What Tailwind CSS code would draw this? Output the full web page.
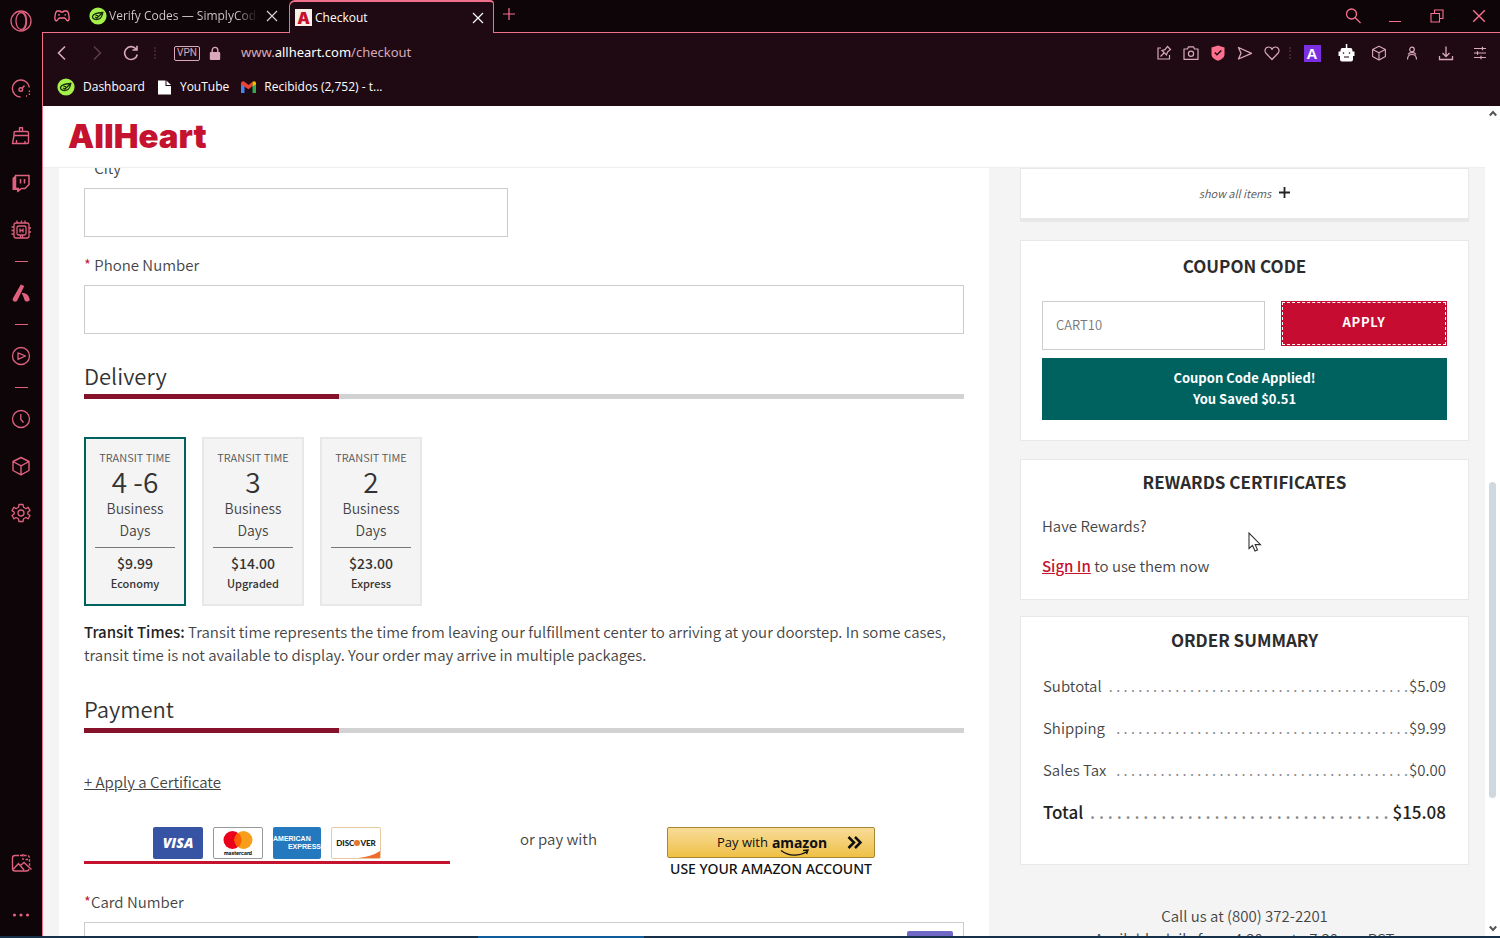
<!DOCTYPE html>
<html lang="en">
<head>
<meta charset="utf-8">
<title>Checkout</title>
<script src="https://cdn.jsdelivr.net/npm/@tailwindcss/browser@4"></script>
</head>
<body class="h-screen overflow-hidden bg-[#0d0508] font-['Noto_Sans_CJK_SC',sans-serif] text-[#444]">
<svg class="hidden">
  <defs>
    <symbol id="cube" viewBox="0 0 20 20"><path d="M10 1.500 18 5.500V14.500L10 18.800 2 14.500V5.500ZM2 5.500 10 9.800 18 5.500M10 9.800V18.800" fill="none" stroke="currentColor" stroke-width="1.400" stroke-linejoin="round"/></symbol>
    <symbol id="cross" viewBox="0 0 12 12"><path d="M1 1 11 11M11 1 1 11" fill="none" stroke="currentColor" stroke-width="1.200"/></symbol>
    <symbol id="leaf" viewBox="0 0 18 18"><circle cx="9" cy="9" r="8.600" fill="#a6f04c"/><path d="M3.500 9.500C4.500 6.500 7.500 6 13.800 5.500 13.300 8.500 12 11.500 9.500 12.200 6.500 13 3.300 12 3.500 9.500ZM6 10 8 11 13.500 5.700M6.500 8 9 8.800" fill="none" stroke="#1a2a0c" stroke-width="1.300"/></symbol>
  </defs>
</svg>
<div class="flex h-full flex-col">
<div class="flex min-h-0 flex-1">

  <!-- Browser sidebar -->
  <nav aria-label="Sidebar" class="flex w-[42px] shrink-0 flex-col items-center text-[#e0607f]">
    <button aria-label="Opera menu" class="flex h-[42px] w-full items-center justify-center"><svg class="size-[22px]" viewBox="0 0 22 22" fill="none" stroke="currentColor" stroke-width="1.300"><circle cx="11" cy="11" r="10"/><ellipse cx="11" cy="11" rx="5" ry="8.500"/><path d="M12 1.500C18 4 18 18 12 20.500"/></svg></button>
    <button aria-label="Speed dial" class="mt-[23px] flex h-[47px] w-full items-center justify-center"><svg class="size-5" viewBox="0 0 20 20" fill="none" stroke="currentColor" stroke-width="1.400"><path d="M9.500 18A8.500 8.500 0 1 1 18.300 8.500"/><circle cx="9.800" cy="10.500" r="1.800"/><path d="M11.200 9.200 13.500 6.500"/><path d="M18.400 11.500V17M15 17H16" stroke-dasharray="1.500 1.500"/></svg></button>
    <button aria-label="Cleaner" class="flex h-[47px] w-full items-center justify-center"><svg class="size-5" viewBox="0 0 20 20" fill="none" stroke="currentColor" stroke-width="1.400" stroke-linejoin="round"><path d="M8.500 5.500V1.800H11.500V5.500M3 9.500V7Q3 5.500 4.500 5.500H16Q17.500 5.500 17.500 7V9.500ZM3 9.500 1.500 17.500H16Q17.500 17.500 17.500 16V9.500M5.500 17V14M14 17V15"/></svg></button>
    <button aria-label="Twitch" class="flex h-[47px] w-full items-center justify-center"><svg class="size-5" viewBox="0 0 20 20" fill="none" stroke="currentColor" stroke-width="1.500"><path d="M4.500 2.500H18V11.500L14 15.500H10.500L7.500 18V15.500H4.500Z"/><path d="M1.500 5 5 2V15.500H8V17L6 19.500V17H1.500Z" fill="currentColor" stroke="none"/><path d="M9.500 6V10.500M13.500 6V10.500"/></svg></button>
    <button aria-label="GX Control" class="flex h-[47px] w-full items-center justify-center"><svg class="size-5" viewBox="0 0 20 20" fill="none" stroke="currentColor" stroke-width="1.300"><rect x="3" y="3" width="15" height="15" rx="2"/><rect x="6" y="6" width="9" height="9" rx="1.500"/><path d="M9 8.500V12.500M12 8.500V12.500M9 10.500H12M6 .5V3M10.500 .5V3M14 .5V3M.5 7H3M.5 10.500H3M.5 14H3M18 8H20M18 12H20M9.500 15V18M11.500 15V18"/></svg></button>
    <span class="flex h-4 items-center"><span class="h-px w-[13px] bg-current"></span></span>
    <button aria-label="Aria" class="flex h-[47px] w-full items-center justify-center"><svg class="size-5" viewBox="0 0 20 20" fill="currentColor"><path d="M9.800 1.500 13.300 3 6 18C4 20 .8 18 1.800 15.500ZM10.500 10C15 9.500 18 12 18.800 17 17 19.300 14.500 19 13.500 17 12.800 14.500 12 12.500 10.500 10Z"/></svg></button>
    <span class="flex h-4 items-center"><span class="h-px w-[13px] bg-current"></span></span>
    <button aria-label="Player" class="flex h-[47px] w-full items-center justify-center"><svg class="size-5" viewBox="0 0 20 20" fill="none" stroke="currentColor" stroke-width="1.300"><circle cx="10" cy="10" r="8.500"/><path d="M7 6.800 14.500 10 7 13.300Z" stroke-linejoin="round"/></svg></button>
    <span class="flex h-4 items-center"><span class="h-px w-[13px] bg-current"></span></span>
    <button aria-label="History" class="flex h-[47px] w-full items-center justify-center"><svg class="size-5" viewBox="0 0 20 20" fill="none" stroke="currentColor" stroke-width="1.300"><circle cx="10" cy="10" r="8.500"/><path d="M9.800 5V10.500L12.500 13.500"/></svg></button>
    <button aria-label="Extensions" class="flex h-[47px] w-full items-center justify-center"><svg class="size-5"><use href="#cube"/></svg></button>
    <button aria-label="Settings" class="flex h-[47px] w-full items-center justify-center"><svg class="size-5" viewBox="0 0 20 20" fill="none" stroke="currentColor" stroke-width="1.300" stroke-linejoin="round"><path d="M8 1.500H12L12.600 4.300 15 5.700 17 4.200 19 7.600 16.800 9V11L19 12.500 17 15.800 15 14.500 12.600 15.800 12 18.500H8L7.400 15.800 5 14.500 3 15.800 1 12.500 3.200 11V9L1 7.600 3 4.200 5 5.700 7.400 4.300Z"/><circle cx="10" cy="10" r="3"/></svg></button>
    <span class="flex-1"></span>
    <button aria-label="Snapshot wallpaper" class="flex h-[62px] w-full items-center justify-center"><svg class="size-[22px]" viewBox="0 0 22 22" fill="none" stroke="currentColor" stroke-width="1.400"><path d="M9 3.500H5A2.500 2.500 0 0 0 2.500 6V16.500A2.500 2.500 0 0 0 5 19H17A2.500 2.500 0 0 0 19 17M3.500 17 8.500 11.500 14 18M10.500 13.500 14 10.500 21.500 17.500"/><path d="M10 3.500H17A2.500 2.500 0 0 1 19.500 6V14M13 2V8M15.500 7.500H19" stroke-dasharray="2.500 1.500"/></svg></button>
    <button aria-label="More" class="flex h-[42px] w-full items-center justify-center"><svg class="size-[18px]" viewBox="0 0 18 18" fill="currentColor"><circle cx="2.500" cy="9" r="1.600"/><circle cx="9" cy="9" r="1.600"/><circle cx="15.500" cy="9" r="1.600"/></svg></button>
  </nav>

  <div class="flex min-w-0 flex-1 flex-col">
    <!-- Tab strip -->
    <div class="flex h-[33px] shrink-0 font-['Open_Sans','Noto_Sans',sans-serif] text-[12px] text-[#fa6f8f]">
      <button aria-label="GX Corner" class="flex w-10 items-center justify-center border-b border-[#f0708c]"><svg class="h-3 w-4" viewBox="0 0 16 12" fill="none" stroke="currentColor" stroke-width="1.300"><path d="M3.500 1H6L7 2H9L10 1H12.500C14.500 1 15.300 6 15 9.500 14.500 11.500 12.800 11 11.800 9L10.500 8H5.500L4.200 9C3.200 11 1.500 11.500 1 9.500 .7 6 1.500 1 3.500 1Z"/><path d="M4 4.800H6M10.500 4.800H12"/></svg></button>
      <div class="flex w-[207px] items-center border-b border-[#f0708c] pr-[11px] pl-[7px]">
        <svg class="size-[18px] shrink-0"><use href="#leaf"/></svg>
        <a href="#" class="ml-[2px] flex-1 overflow-hidden bg-linear-to-r from-[#d5ccd0] from-85% to-transparent bg-clip-text whitespace-nowrap text-transparent">Verify Codes — SimplyCode</a>
        <button aria-label="Close tab" class="ml-2 text-[#d8d0d3]"><svg class="size-3"><use href="#cross"/></svg></button>
      </div>
      <div class="flex w-[205px] items-center rounded-tl-md rounded-tr-sm border-x border-t-2 border-[#f0708c] bg-[#1f0a13] pr-[9px] pl-[5px]">
        <span class="flex size-[17px] items-center justify-center bg-[#f8efe8] font-['Inter',sans-serif] text-[16px] leading-none font-black text-[#c4122f]">A</span>
        <a href="#" class="ml-[3px] flex-1 text-white">Checkout</a>
        <button aria-label="Close tab" class="text-white"><svg class="size-3"><use href="#cross"/></svg></button>
      </div>
      <div class="flex flex-1 items-center border-b border-[#f0708c]">
        <button aria-label="New tab" class="ml-[9px] -mt-1"><svg class="size-3" viewBox="0 0 12 12" stroke="currentColor" stroke-width="1.200"><path d="M6 0V12M0 6H12"/></svg></button>
        <span class="flex-1"></span>
        <button aria-label="Search tabs" class="flex w-[42px] justify-center"><svg class="size-4" viewBox="0 0 16 16" fill="none" stroke="currentColor" stroke-width="1.300"><circle cx="6.500" cy="6" r="5"/><path d="M10 9.500 15.500 15"/></svg></button>
        <button aria-label="Minimize" class="flex w-[42px] justify-center"><svg class="size-3" viewBox="0 0 12 12" stroke="currentColor"><path d="M0 11.500H12"/></svg></button>
        <button aria-label="Restore" class="flex w-[42px] justify-center"><svg class="size-[14px]" viewBox="0 0 14 14" fill="none" stroke="currentColor" stroke-width="1.100"><path d="M1 4.500H9.500V13H1ZM4.500 4.500V1H13V9.500H9.500"/></svg></button>
        <button aria-label="Close window" class="flex w-[42px] justify-center"><svg class="size-[14px]"><use href="#cross"/></svg></button>
      </div>
    </div>

    <div class="flex min-h-0 flex-1 flex-col border-l border-[#f0708c]">
      <!-- Address bar -->
      <div class="flex h-10 shrink-0 items-center bg-[#1f0a13] pr-[3px] text-[#d9a9b9]">
        <button aria-label="Back" class="ml-[11px] flex w-4 justify-center"><svg class="size-4" viewBox="0 0 16 16" fill="none" stroke="currentColor" stroke-width="1.600"><path d="M11 1.500 4.500 8 11 14.500"/></svg></button>
        <button aria-label="Forward" class="ml-[19px] flex w-4 justify-center text-[#5d404b]"><svg class="size-4" viewBox="0 0 16 16" fill="none" stroke="currentColor" stroke-width="1.400"><path d="M5 1.500 11.500 8 5 14.500"/></svg></button>
        <button aria-label="Reload" class="ml-4 flex w-5 justify-center"><svg class="size-4" viewBox="0 0 16 16" fill="none" stroke="currentColor" stroke-width="1.600"><path d="M13 4A6.400 6.400 0 1 0 14.300 9.500M14 .8V5H9.500"/></svg></button>
        <span class="ml-[13px] h-3 border-l-2 border-dotted border-[#3b2430]"></span>
        <button class="ml-[18px] flex h-[15px] w-[26px] items-center justify-center rounded-xs border border-current font-['Roboto',sans-serif] text-[10px] leading-none">VPN</button>
        <svg class="ml-[9px] h-[15px] w-3" viewBox="0 0 12 15"><path d="M3.200 7V4.200A2.800 2.800 0 0 1 8.800 4.200V7" fill="none" stroke="currentColor" stroke-width="1.400"/><rect x=".8" y="6" width="10.400" height="8" rx="1" fill="currentColor"/></svg>
        <div role="textbox" aria-label="Address" contenteditable="true" class="ml-5 flex-1 font-['Noto_Sans','Open_Sans',sans-serif] text-[13px]">www.<span class="text-white">allheart.com</span>/checkout</div>
        <button aria-label="Edit page" class="flex w-[27px] justify-center"><svg class="size-4" viewBox="0 0 16 16" fill="none" stroke="currentColor" stroke-width="1.200"><path d="M5 3H2V14H13.500V10M4.500 11.500 8 8M6 5.500 10.500 10 11.500 7 14.500 4.500 11.500 1.500 9 4.700Z"/></svg></button>
        <button aria-label="Snapshot" class="flex w-[27px] justify-center"><svg class="size-4" viewBox="0 0 16 16" fill="none" stroke="currentColor" stroke-width="1.200"><path d="M1 4H4.500L5.500 1.800H10.500L11.500 4H15V14.300H1Z" stroke-linejoin="round"/><circle cx="8" cy="8.700" r="2.600"/></svg></button>
        <button aria-label="Ad blocker" class="flex w-[27px] justify-center"><svg class="size-4" viewBox="0 0 16 16"><path d="M8 .5 14.500 2.500V9.500C14.500 12.500 11.500 14.500 8 15.800 4.500 14.500 1.500 12.500 1.500 9.500V2.500Z" fill="#ff6f8e"/><path d="M4.800 7.500 7 9.800 11.300 5.500" fill="none" stroke="#1f0a13" stroke-width="1.500"/></svg></button>
        <button aria-label="My Flow" class="flex w-[27px] justify-center"><svg class="size-4" viewBox="0 0 16 16" fill="none" stroke="currentColor" stroke-width="1.300" stroke-linejoin="round"><path d="M1.500 2.500 14.500 8.300 1.500 14 4 8.300Z"/></svg></button>
        <button aria-label="Bookmark" class="flex w-[27px] justify-center"><svg class="size-4" viewBox="0 0 16 16" fill="none" stroke="currentColor" stroke-width="1.200"><path d="M8 14.500 1.800 8C0 5.500 1.500 2 4.500 2 6 2 7.500 3 8 4.500 8.500 3 10 2 11.500 2 14.500 2 16 5.500 14.200 8Z" stroke-linejoin="round"/></svg></button>
        <span class="mr-1 ml-[4px] h-3 border-l-2 border-dotted border-[#3b2430]"></span>
        <button aria-label="A extension" class="flex w-[34px] justify-center"><span class="flex size-[17px] items-center justify-center bg-[#7c2fe0] font-['Liberation_Sans',sans-serif] text-[15px] leading-none font-bold text-white">A</span></button>
        <button aria-label="Robot extension" class="flex w-[34px] justify-center"><svg class="h-[18px] w-[17px]" viewBox="0 0 17 18"><path d="M7.800 0H9.300V4H12.500C14 4 14.500 5 14.500 7.500H16.500V12H15V15.500Q15 17.500 13 17.500H4Q2 17.500 2 15.500V12H.5V7.500H2.500C2.500 5 3 4 4.500 4H7.800Z" fill="#fff"/><path d="M5.500 8V10M11.500 8V10M6 13H11" stroke="#6b5560" stroke-width="1.300"/></svg></button>
        <button aria-label="Extensions" class="flex w-8 justify-center"><svg class="size-4"><use href="#cube"/></svg></button>
        <button aria-label="Profile" class="flex w-[34px] justify-center"><svg class="size-4" viewBox="0 0 16 16" fill="none" stroke="currentColor" stroke-width="1.200"><circle cx="8" cy="4.500" r="2.300"/><path d="M3.500 14.500C3.500 11 5.500 9.500 8 9.500 10.500 9.500 12.500 11 12.500 14.500M4 9.500Q5 7.500 8 7.300 11 7.500 12 9.500"/></svg></button>
        <button aria-label="Downloads" class="flex w-[34px] justify-center"><svg class="size-4" viewBox="0 0 16 16" fill="none" stroke="currentColor" stroke-width="1.300"><path d="M8 1.500V11M4.500 8 8 11.500 11.500 8M1.500 11V14.500H14.500V11"/></svg></button>
        <button aria-label="Easy setup" class="flex w-[34px] justify-center"><svg class="size-4" viewBox="0 0 16 16" fill="none" stroke="currentColor" stroke-width="1.200"><path d="M2 3.500H14M2 8H14M2 12.500H14M10.500 1.700V5.300M5.500 6.200V9.800M9 10.700V14.300"/></svg></button>
      </div>
      <!-- Bookmarks -->
      <div class="flex h-[33px] shrink-0 items-center bg-[#1f0a13] pb-[5px] pl-[14px] font-['Open_Sans','Noto_Sans',sans-serif] text-[12px] text-white">
        <a href="#" class="flex items-center gap-2"><svg class="size-[18px]"><use href="#leaf"/></svg>Dashboard</a>
        <a href="#" class="ml-[13px] flex items-center gap-[9px]"><svg class="h-[15px] w-[13px]" viewBox="0 0 13 15"><path d="M0 .5H7.500V6H13V14.500H0ZM8.500 .5 13 5H8.500Z" fill="#fff"/></svg>YouTube</a>
        <a href="#" class="ml-3 flex items-center gap-2"><svg class="h-3 w-[15px]" viewBox="0 0 15 12"><path d="M0 2V12H3.500V5Z" fill="#4285f4"/><path d="M15 2V12H11.500V5Z" fill="#34a853"/><path d="M0 2Q1-.5 3.500 .800L7.500 4 11.500 .800V5L7.500 8.300 0 3.500Z" fill="#ea4335"/><path d="M11.500 .800Q14.500-.8 15 2V3.200L11.500 5.500Z" fill="#fbbc04"/></svg>Recibidos (2,752) - t...</a>
      </div>

      <!-- Web page -->
      <div class="flex min-h-0 flex-1 bg-white">
        <div class="flex min-w-0 flex-1 flex-col">
          <header class="z-10 flex h-[62px] shrink-0 items-center border-b border-[#eee] bg-white pl-[25px]">
            <a href="#" class="font-['Inter',sans-serif] text-[33px] leading-none font-black text-[#c4122f]">AllHeart</a>
          </header>
          <div class="flex min-h-0 flex-1 overflow-hidden bg-[#f4f4f4] pl-4">
            <main class="min-w-0 flex-1 bg-white px-[25px] text-[15px] leading-6 font-[350]">
              <div class="-mt-3 flex flex-col gap-2">
                <label for="city"><span class="text-[#c4122f]">*</span> City</label>
                <input id="city" class="h-[49px] w-[424px] border border-[#ccc] px-3">
              </div>
              <div class="mt-4 flex flex-col gap-2">
                <label for="phone"><span class="text-[#c4122f]">*</span> Phone Number</label>
                <input id="phone" class="h-[49px] border border-[#ccc] px-3">
              </div>

              <h2 class="mt-[25px] text-[22px] leading-[32px] text-[#333]">Delivery</h2>
              <div class="mt-[3px] flex h-[5px] bg-[#d2d2d2]"><span class="w-[29%] bg-[#86112a]"></span></div>

              <div class="mt-[38px] flex gap-4 text-center text-[#333]">
                <button class="w-[102px] border-2 border-[#00625f] bg-[#f4f4f4] px-[9px] pt-[10px] pb-3">
                  <span class="block text-[11px] leading-4 text-[#555]">TRANSIT TIME</span>
                  <span class="block text-[28px] leading-[32px]">4 -6</span>
                  <span class="block border-b border-[#777] pb-[6px] text-[14px] leading-[22px] text-[#444]">Business<br>Days</span>
                  <span class="mt-1 block text-[14px] leading-[22px] font-medium">$9.99</span>
                  <span class="block text-[11px] leading-[18px] font-medium">Economy</span>
                </button>
                <button class="w-[102px] border-2 border-[#e8e8e8] bg-[#f4f4f4] px-[9px] pt-[10px] pb-3">
                  <span class="block text-[11px] leading-4 text-[#555]">TRANSIT TIME</span>
                  <span class="block text-[28px] leading-[32px]">3</span>
                  <span class="block border-b border-[#777] pb-[6px] text-[14px] leading-[22px] text-[#444]">Business<br>Days</span>
                  <span class="mt-1 block text-[14px] leading-[22px] font-medium">$14.00</span>
                  <span class="block text-[11px] leading-[18px] font-medium">Upgraded</span>
                </button>
                <button class="w-[102px] border-2 border-[#e8e8e8] bg-[#f4f4f4] px-[9px] pt-[10px] pb-3">
                  <span class="block text-[11px] leading-4 text-[#555]">TRANSIT TIME</span>
                  <span class="block text-[28px] leading-[32px]">2</span>
                  <span class="block border-b border-[#777] pb-[6px] text-[14px] leading-[22px] text-[#444]">Business<br>Days</span>
                  <span class="mt-1 block text-[14px] leading-[22px] font-medium">$23.00</span>
                  <span class="block text-[11px] leading-[18px] font-medium">Express</span>
                </button>
              </div>
              <p class="mt-[14px] leading-[23px]"><b class="font-medium text-[#222]">Transit Times:</b> Transit time represents the time from leaving our fulfillment center to arriving at your doorstep. In some cases, transit time is not available to display. Your order may arrive in multiple packages.</p>

              <h2 class="mt-[26px] text-[22px] leading-[32px] text-[#333]">Payment</h2>
              <div class="mt-1 flex h-[5px] bg-[#d2d2d2]"><span class="w-[29%] bg-[#86112a]"></span></div>

              <a href="#" class="mt-[37px] block w-fit underline">+ Apply a Certificate</a>

              <div class="mt-[33px] flex items-start">
                <button aria-label="Pay by card" class="flex h-[37px] w-[366px] items-start justify-center gap-[10px] border-b-3 border-[#c4122f]">
                  <span class="flex h-8 w-[50px] items-center justify-center rounded-xs bg-[#3753a4] font-['Open_Sans',sans-serif] text-[14px] leading-none font-extrabold text-white italic">VISA</span>
                  <span class="flex h-8 w-[50px] flex-col items-center rounded-xs border border-[#999] pt-[3px]">
                    <svg class="h-[18px] w-[30px]" viewBox="0 0 30 18"><circle cx="9.500" cy="9" r="9" fill="#eb001b"/><circle cx="20.500" cy="9" r="9" fill="#f79e1b"/><path d="M15 1.900A9 9 0 0 1 15 16.100 9 9 0 0 1 15 1.900Z" fill="#ff5f00"/></svg>
                    <span class="font-['Inter',sans-serif] text-[5px] leading-[8px] font-bold text-black">mastercard</span>
                  </span>
                  <span class="flex h-8 w-12 flex-col justify-center rounded-xs bg-[#2478be] font-['Liberation_Sans',sans-serif] text-[7px] leading-[8px] font-bold text-white"><span class="self-start">AMERICAN</span><span class="self-end">EXPRESS</span></span>
                  <span class="relative flex h-8 w-[50px] items-center justify-center overflow-hidden rounded-xs border border-[#e8c9a0] font-['Lato',sans-serif] text-[8px] leading-none font-black text-[#222]">DISC<span class="size-[6px] rounded-full bg-[#e8742c]"></span>VER<svg class="absolute right-0 bottom-0 h-[7px] w-[22px]" viewBox="0 0 22 7"><path d="M0 7Q14 5.500 22 0V7Z" fill="#ee6c2c"/></svg></span>
                </button>
                <span class="ml-[70px] w-[78px]">or pay with</span>
                <div class="ml-[69px] flex flex-col items-center">
                  <button class="flex h-[31px] w-[208px] items-center rounded-xs border border-[#a88734] bg-linear-to-b from-[#f8dc96] to-[#efc043] font-['Open_Sans',sans-serif] text-[13px] leading-none font-normal text-[#111]">
                    <span class="ml-[49px]">Pay with</span>
                    <span class="relative ml-1 font-['Noto_Sans',sans-serif] text-[14px] font-bold">amazon<svg class="absolute top-[13px] left-[8px] h-2 w-[30px]" viewBox="0 0 30 8"><path d="M1 1.500C9 7.500 19 7.500 27 2.500M23 1.500 28 1 26.500 5" fill="none" stroke="#111" stroke-width="1.400"/></svg></span>
                    <svg class="mr-3 ml-auto h-[13px] w-[15px]" viewBox="0 0 15 13" fill="none" stroke="#111" stroke-width="2.500"><path d="M1.500 1 7 6.500 1.500 12M8 1 13.500 6.500 8 12"/></svg>
                  </button>
                  <span class="font-['Noto_Sans',sans-serif] text-[14px] leading-[22px] font-medium text-[#111]">USE YOUR AMAZON ACCOUNT</span>
                </div>
              </div>

              <div class="mt-[10px] flex flex-col gap-2">
                <label for="card"><span class="text-[#c4122f]">*</span>Card Number</label>
                <div class="flex h-[49px] items-start border border-[#ccc]">
                  <input id="card" class="h-full min-w-0 flex-1 px-3">
                  <span class="mt-2 mr-[10px] h-8 w-[46px] rounded-xs bg-[#6f68c4]"></span>
                </div>
              </div>
            </main>

            <aside class="w-[496px] shrink-0 pr-4 pl-[31px] text-[15px] leading-6 font-[350]">
              <section class="flex h-[54px] items-center justify-center border border-b-4 border-[#e8e8e8] bg-white pb-[2px]">
                <button class="flex items-center gap-2 text-[11px] text-[#555]"><i>show all items</i><svg class="size-[11px]" viewBox="0 0 11 11" stroke="#222" stroke-width="1.800"><path d="M5.500 0V11M0 5.500H11"/></svg></button>
              </section>
              <section class="mt-[18px] border border-[#e8e8e8] bg-white px-[21px] pt-[13px] pb-5">
                <h3 class="text-center text-[17px] font-bold text-[#2c2c2c]">COUPON CODE</h3>
                <div class="mt-[23px] flex gap-4">
                  <input aria-label="Coupon code" value="CART10" class="h-[49px] min-w-0 flex-1 border border-[#ccc] px-[13px] pb-[3px] text-[13px] text-[#777]">
                  <button class="h-[45px] w-[166px] bg-[#c60c30] pb-[3px] text-[13px] font-bold tracking-wider text-white outline-1 -outline-offset-2 outline-white outline-dashed">APPLY</button>
                </div>
                <p class="mt-2 bg-[#00625f] pt-[9px] pb-[11px] text-center text-[13px] leading-[21px] font-bold text-white">Coupon Code Applied!<br>You Saved $0.51</p>
              </section>
              <section class="mt-[18px] border border-[#e8e8e8] bg-white px-[21px] pt-[10px] pb-[21px]">
                <h3 class="text-center text-[17px] font-bold text-[#2c2c2c]">REWARDS CERTIFICATES</h3>
                <p class="mt-5">Have Rewards?</p>
                <p class="mt-4"><a href="#" class="font-medium text-[#c4122f] underline">Sign In</a> to use them now</p>
              </section>
              <section class="mt-4 border border-[#e8e8e8] bg-white px-[22px] pt-[11px] pb-10">
                <h3 class="text-center text-[17px] font-bold text-[#2c2c2c]">ORDER SUMMARY</h3>
                <dl class="mt-[22px] flex flex-col gap-[18px]">
                  <div class="flex"><dt>Subtotal</dt><span aria-hidden="true" class="flex flex-1 justify-end overflow-hidden pr-px whitespace-nowrap text-[#888]">. . . . . . . . . . . . . . . . . . . . . . . . . . . . . . . . . . . . . . . . .</span><dd>$5.09</dd></div>
                  <div class="flex"><dt>Shipping</dt><span aria-hidden="true" class="flex flex-1 justify-end overflow-hidden pr-px whitespace-nowrap text-[#888]">. . . . . . . . . . . . . . . . . . . . . . . . . . . . . . . . . . . . . . . .</span><dd>$9.99</dd></div>
                  <div class="flex"><dt>Sales Tax</dt><span aria-hidden="true" class="flex flex-1 justify-end overflow-hidden pr-px whitespace-nowrap text-[#888]">. . . . . . . . . . . . . . . . . . . . . . . . . . . . . . . . . . . . . . . .</span><dd>$0.00</dd></div>
                  <div class="flex text-[17px] font-medium text-[#222]"><dt>Total</dt><span aria-hidden="true" class="flex flex-1 justify-end overflow-hidden px-1 whitespace-nowrap text-[#888]">. . . . . . . . . . . . . . . . . . . . . . . . . . . . . . . . . .</span><dd>$15.08</dd></div>
                </dl>
              </section>
              <p class="mt-[39px] text-center leading-[23px]">Call us at (800) 372-2201<br>Available daily from 4:30 am to 7:30 pm PST</p>
            </aside>
          </div>
        </div>
        <!-- Page scrollbar -->
        <div class="flex w-[15px] shrink-0 flex-col items-center text-[#555]">
          <svg class="mt-1 h-[7px] w-2" viewBox="0 0 8 7" fill="none" stroke="currentColor" stroke-width="2"><path d="M.8 5.500 4 2 7.200 5.500"/></svg>
          <span class="flex-[365]"></span>
          <span class="w-[7px] flex-[315] rounded-full bg-[#cfd8df]"></span>
          <span class="flex-[127]"></span>
          <svg class="mb-1 h-[7px] w-2" viewBox="0 0 8 7" fill="none" stroke="currentColor" stroke-width="2"><path d="M.8 1.500 4 5 7.200 1.500"/></svg>
        </div>
      </div>
    </div>
  </div>
</div>
<div class="flex h-[2px] shrink-0 bg-[#17304a]"><span class="ml-[478px] w-[166px] bg-[#0f5c9c]"></span></div>
</div>
<!-- Mouse pointer -->
<svg class="absolute top-[532px] left-[1248px] h-5 w-[14px]" viewBox="0 0 14 20"><path d="M1 1V16.500L4.500 13.500 7 19 9.500 18 7.200 12.600H12.500Z" fill="#fff" stroke="#333" stroke-width="1.100"/></svg>
</body>
</html>
